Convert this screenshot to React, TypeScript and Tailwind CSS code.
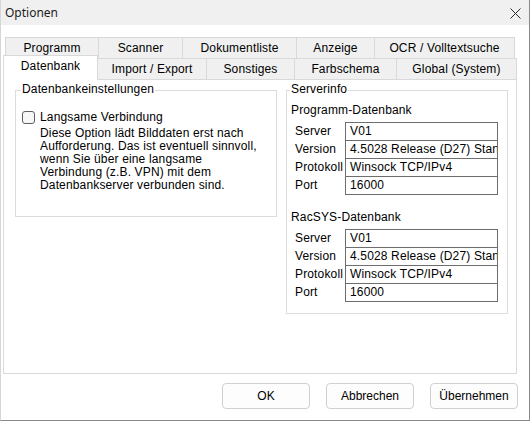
import React from "react"

type Tab = { label: string; w: string; first?: boolean }

const topRow: Tab[] = [
    { label: "Programm", w: "w-[94px]", first: true },
    { label: "Scanner", w: "w-[84px]" },
    { label: "Dokumentliste", w: "w-[114px]" },
    { label: "Anzeige", w: "w-[78px]" },
    { label: "OCR / Volltextsuche", w: "w-[140px]" },
]

const bottomRow: Tab[] = [
    { label: "Import / Export", w: "w-[109px]" },
    { label: "Sonstiges", w: "w-[88px]" },
    { label: "Farbschema", w: "w-[102px]" },
    { label: "Global (System)", w: "w-[120px]" },
]

const serverRows: [string, string][] = [
    ["Server", "V01"],
    ["Version", "4.5028 Release (D27) Standard"],
    ["Protokoll", "Winsock TCP/IPv4"],
    ["Port", "16000"],
]

function GroupBox({
    title,
    legendLeft,
    className,
    children,
}: {
    title: string
    legendLeft: string
    className: string
    children: React.ReactNode
}) {
    return (
        <div className={`relative shrink-0 border border-[#dcdcdc] ${className}`}>
            <span className={`absolute -top-[8px] ${legendLeft} bg-white px-px leading-[13px]`}>
                {title}
            </span>
            {children}
        </div>
    )
}

function InfoTable({ rows }: { rows: [string, string][] }) {
    return (
        <div className="flex">
            <div className="w-[54px] pt-px">
                {rows.map(([label]) => (
                    <div key={label} className="h-[18px] whitespace-nowrap pl-[4px] leading-[17px]">
                        {label}
                    </div>
                ))}
            </div>
            <div className="w-[153px] border-x border-t border-[#6e6e6e]">
                {rows.map(([label, value]) => (
                    <div
                        key={label}
                        className="h-[18px] overflow-hidden whitespace-nowrap border-b border-[#6e6e6e] pl-[4px] leading-[17px]"
                    >
                        {value}
                    </div>
                ))}
            </div>
        </div>
    )
}

function Button({ children }: { children: React.ReactNode }) {
    return (
        <button className="h-[26px] w-[88px] rounded-[4px] border border-[#d0d0d0] bg-[#fdfdfd] text-[12px] text-black">
            {children}
        </button>
    )
}

export default function App() {
    return (
        <div className="flex h-[421px] w-[530px] flex-col border-b border-l border-r border-b-[#8a8a8a] border-l-[#d6d6d6] border-r-[#8a8a8a] bg-white font-['Liberation_Sans',Arial,sans-serif] text-[12px] tracking-[0.15px] text-black">
            {/* title bar */}
            <div className="flex h-[25px] shrink-0 items-center justify-between bg-[#f0f0f0] pl-[4px] pr-[8px] tracking-normal">
                <span className="font-['Noto_Sans',sans-serif] text-[12px] text-[#1b1b1b]">Optionen</span>
                <svg width="11" height="11" viewBox="0 0 11 11" className="mt-px">
                    <path d="M0.5 0.5L10.5 10.5M10.5 0.5L0.5 10.5" stroke="#2b2b2b" strokeWidth="1" />
                </svg>
            </div>

            {/* tabs */}
            <div className="pt-[12px]">
                <div className="ml-[4px] flex h-[21px]">
                    {topRow.map((t) => (
                        <div
                            key={t.label}
                            className={`${t.w} flex h-[21px] items-center justify-center whitespace-nowrap border-r border-t border-[#d9d9d9] bg-[#f0f0f0] pb-px ${t.first ? "border-l" : ""}`}
                        >
                            {t.label}
                        </div>
                    ))}
                </div>
                <div className="ml-[2px] flex h-[21px] items-end">
                    <div className="relative z-10 -mb-px flex h-[25px] w-[95px] items-center justify-center border-x border-t border-[#d9d9d9] bg-white pb-[5px]">
                        Datenbank
                    </div>
                    {bottomRow.map((t) => (
                        <div
                            key={t.label}
                            className={`${t.w} flex h-[21px] items-center justify-center whitespace-nowrap border-r border-t border-[#d9d9d9] bg-[#f0f0f0] pb-px`}
                        >
                            {t.label}
                        </div>
                    ))}
                </div>
            </div>

            {/* tab panel */}
            <div className="ml-[2px] flex h-[295px] w-[514px] shrink-0 items-start gap-[9px] border border-[#d9d9d9] bg-white pl-[11px] pt-[10px]">
                <GroupBox title="Datenbankeinstellungen" legendLeft="left-[5px]" className="h-[127px] w-[262px] pl-[6px] pt-[20px]">
                    <div className="flex items-center gap-[5px]">
                        <span className="h-[13px] w-[13px] rounded-[3px] border border-[#5f5f5f] bg-[#f7f7f7]" />
                        <span className="leading-[13px]">Langsame Verbindung</span>
                    </div>
                    <p className="ml-[18px] mt-[3px] whitespace-nowrap leading-[13px]">
                        Diese Option lädt Bilddaten erst nach
                        <br />
                        Aufforderung. Das ist eventuell sinnvoll,
                        <br />
                        wenn Sie über eine langsame
                        <br />
                        Verbindung (z.B. VPN) mit dem
                        <br />
                        Datenbankserver verbunden sind.
                    </p>
                </GroupBox>

                <GroupBox title="Serverinfo" legendLeft="left-[3px]" className="h-[224px] w-[222px] pl-[4px] pt-[13px]">
                    <div className="mb-[5px] leading-[13px]">Programm-Datenbank</div>
                    <InfoTable rows={serverRows} />
                    <div className="mb-[5px] mt-[16px] leading-[13px]">RacSYS-Datenbank</div>
                    <InfoTable rows={serverRows} />
                </GroupBox>
            </div>

            {/* buttons */}
            <div className="flex justify-end gap-[16px] pr-[11px] pt-[9px] tracking-normal">
                <Button>OK</Button>
                <Button>Abbrechen</Button>
                <Button>Übernehmen</Button>
            </div>
        </div>
    )
}
